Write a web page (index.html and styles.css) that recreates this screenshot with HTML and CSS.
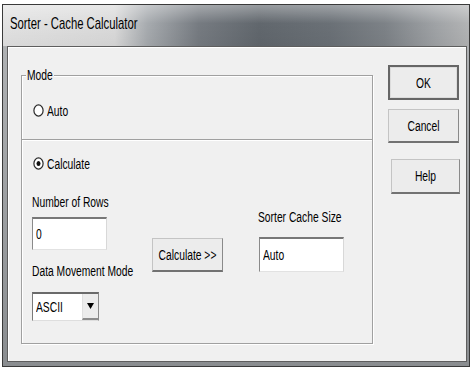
FILE: index.html
```html
<!DOCTYPE html>
<html>
<head>
<meta charset="utf-8">
<title>Sorter - Cache Calculator</title>
<link rel="stylesheet" href="styles.css">
</head>
<body>
<div class="window">
  <div class="titlebar"><span class="t title">Sorter - Cache Calculator</span></div>
  <div class="client">
    <div class="group">
      <span class="legend"><span class="t">Mode</span></span>
      <div class="sec-auto">
        <div class="radio">
          <svg class="radio-ico" width="11" height="13" viewBox="0 0 11 13"><ellipse cx="5.5" cy="6.5" rx="4.6" ry="5.6" fill="#fff" stroke="#2a2a2a" stroke-width="1.2"/></svg>
          <span class="t">Auto</span>
        </div>
      </div>
      <div class="sec-calc">
        <div class="radio radio-calc">
          <svg class="radio-ico" width="11" height="13" viewBox="0 0 11 13"><ellipse cx="5.5" cy="6.5" rx="4.6" ry="5.6" fill="#fff" stroke="#2a2a2a" stroke-width="1.2"/><ellipse cx="5.5" cy="6.5" rx="2" ry="2.5" fill="#111"/></svg>
          <span class="t">Calculate</span>
        </div>
        <div class="cols">
          <div class="col col-left">
            <div class="lbl lbl-rows"><span class="t">Number of Rows</span></div>
            <div class="edit edit-rows"><span class="t">0</span></div>
            <div class="lbl lbl-dmm"><span class="t">Data Movement Mode</span></div>
            <div class="combo">
              <div class="combo-text"><span class="t">ASCII</span></div>
              <div class="combo-btn"><svg width="7" height="6" viewBox="0 0 7 6"><path d="M0 0H7L3.5 6Z" fill="#000"/></svg></div>
            </div>
          </div>
          <div class="col col-mid">
            <div class="btn btn-calc"><span class="t">Calculate &gt;&gt;</span></div>
          </div>
          <div class="col col-right">
            <div class="lbl lbl-size"><span class="t">Sorter Cache Size</span></div>
            <div class="edit edit-size"><span class="t">Auto</span></div>
          </div>
        </div>
      </div>
    </div>
    <div class="buttons">
      <div class="btn btn-ok"><span class="t">OK</span></div>
      <div class="btn btn-cancel"><span class="t">Cancel</span></div>
      <div class="btn btn-help"><span class="t">Help</span></div>
    </div>
  </div>
</div>
</body>
</html>
```
FILE: styles.css
```css
body {
  margin: 0;
  background: #fff;
  font-family: "Liberation Sans", Arial, sans-serif;
  font-size: 10.3px;
  line-height: 12px;
  color: #000;
}

.t {
  display: inline-block;
  transform: scaleY(1.5);
  transform-origin: 50% 50%;
  white-space: nowrap;
}

.window {
  margin: 4px 0 0 2px;
  width: 468px;
  height: 363px;
  box-sizing: border-box;
  border: 1px solid #3a3a3a;
  background: linear-gradient(to bottom, #b4b6b8, #8a8d90);
  display: flex;
  flex-direction: column;
}

.titlebar {
  height: 41px;
  flex: none;
  box-sizing: border-box;
  padding: 11px 0 0 7px;
  background:
    linear-gradient(to bottom, rgba(255,255,255,0.35) 0%, rgba(255,255,255,0) 45%, rgba(0,0,0,0.04) 100%),
    linear-gradient(to right, #e2e2e2 0%, #dadada 24%, #a7abaf 31%, #767b81 42%, #61676d 55%, #6a7076 70%, #7d8287 82%, #a0a3a6 93%, #b3b4b5 100%);
}

.title {
  font-size: 11.3px;
  line-height: 14px;
}

.client {
  margin: 0 2px 0 4px;
  height: 316px;
  flex: none;
  box-sizing: border-box;
  border: 1px solid #5e5e5e;
  box-shadow: inset 1px 1px 0 #fff;
  background: #f0f0f0;
  display: flex;
  align-items: flex-start;
  padding: 18px 0 0 13px;
}

.group {
  position: relative;
  width: 352px;
  height: 269px;
  margin-top: 10px;
  box-sizing: border-box;
  border: 1px solid #a0a0a0;
  box-shadow: inset 1px 1px 0 #fff, 1px 1px 0 #fff;
  display: flex;
  flex-direction: column;
  flex: none;
}

.legend {
  position: absolute;
  left: 4px;
  top: -7px;
  padding: 0 1px;
  background: #f0f0f0;
  line-height: 12px;
}

.sec-auto {
  height: 63px;
  flex: none;
  box-sizing: border-box;
  padding: 28px 0 0 11px;
}

.sec-calc {
  flex: 1;
  border-top: 1px solid #a0a0a0;
  box-shadow: inset 0 1px 0 #fff;
  padding: 17px 0 0 10px;
}

.radio {
  display: flex;
  align-items: center;
  height: 13px;
  gap: 3px;
}

.radio-ico {
  display: block;
  flex: none;
}

.radio-calc {
  margin-left: 1px;
}

.cols {
  display: flex;
  align-items: flex-start;
}

.col {
  display: flex;
  flex-direction: column;
  flex: none;
}

.col-left {
  width: 75px;
}

.col-mid {
  width: 71px;
  margin-left: 45px;
}

.col-right {
  margin-left: 35px;
}

.lbl {
  height: 12px;
}

.lbl-rows {
  margin-top: 26px;
}

.lbl-dmm {
  margin-top: 15px;
}

.lbl-size {
  margin-top: 41px;
}

.edit {
  box-sizing: border-box;
  background: #fff;
  border-top: 2px solid #777;
  border-left: 1px solid #8a8a8a;
  border-right: 1px solid #d8d8d8;
  border-bottom: 1px solid #e2e2e2;
  display: flex;
  align-items: center;
  padding-left: 3px;
}

.edit-rows {
  margin-top: 9px;
  width: 75px;
  height: 33px;
}

.edit-size {
  margin-top: 14px;
  margin-left: 1px;
  width: 85px;
  height: 35px;
}

.combo {
  margin-top: 15px;
  display: flex;
  width: 67px;
  height: 29px;
  box-sizing: border-box;
  background: #fff;
  border-top: 2px solid #6a6a6a;
  border-left: 1px solid #7a7a7a;
  border-right: 1px solid #8a8a8a;
  border-bottom: 1px solid #dedede;
}

.combo-text {
  flex: 1;
  display: flex;
  align-items: center;
  padding-left: 3px;
}

.combo-btn {
  width: 16px;
  flex: none;
  box-sizing: border-box;
  background: #ececec;
  border-left: 1px solid #e0e0e0;
  border-bottom: 2px solid #8c8c8c;
  display: flex;
  align-items: center;
  justify-content: center;
}

.combo-btn svg {
  display: block;
}

.btn {
  box-sizing: border-box;
  display: flex;
  align-items: center;
  justify-content: center;
  background: #ececec;
  border-top: 1px solid #c4c4c4;
  border-left: 1px solid #c4c4c4;
  border-right: 1px solid #8a8a8a;
  border-bottom: 2px solid #727272;
}

.btn-calc {
  margin-top: 68px;
  width: 71px;
  height: 34px;
}

.buttons {
  margin-left: 15px;
  width: 71px;
  display: flex;
  flex-direction: column;
  flex: none;
}

.btn-ok {
  height: 35px;
  border: 2px solid #666;
  box-shadow: inset 0 0 0 1px #dcdcdc;
}

.btn-cancel {
  height: 34px;
  margin-top: 9px;
}

.btn-help {
  height: 35px;
  width: 69px;
  margin-top: 16px;
  margin-left: 3px;
}
```
